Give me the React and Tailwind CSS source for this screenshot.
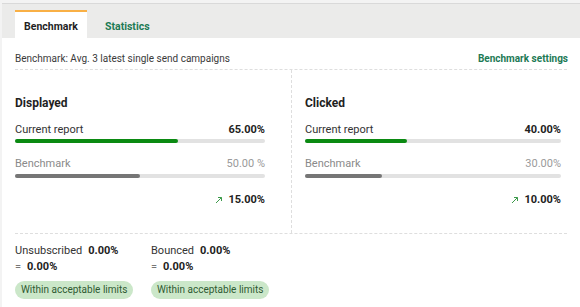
const METRICS = [
  { title: 'Displayed', current: 65, currentLabel: '65.00%', bench: 50, benchLabel: '50.00 %', diff: '15.00%' },
  { title: 'Clicked', current: 40, currentLabel: '40.00%', bench: 30, benchLabel: '30.00%', diff: '10.00%' },
]

const LIMITS = [
  { label: 'Unsubscribed', value: '0.00%', diff: '0.00%' },
  { label: 'Bounced', value: '0.00%', diff: '0.00%' },
]

function UpArrow() {
  return (
    <svg width="8" height="8" viewBox="0 0 8 8" className="mr-[5px]">
      <path d="M1 7 L6.5 1.5 M3 1.5 H6.5 V5" fill="none" stroke="#3c9a4a" strokeWidth="1" />
    </svg>
  )
}

function Bar({ value, color }) {
  return (
    <div className="h-[4px] w-full rounded-full bg-[#e2e2e2]">
      <div className={`h-full rounded-full ${color}`} style={{ width: `${value}%` }} />
    </div>
  )
}

function MetricColumn({ m, className }) {
  return (
    <div className={className}>
      <h3 className="text-[12px] font-bold text-[#1f1f1f] leading-[16px]">{m.title}</h3>

      {/* current report */}
      <div className="mt-[12px] flex justify-between text-[11px] leading-[14px]">
        <span className="text-[#333]">Current report</span>
        <span className="font-bold text-[#222]">{m.currentLabel}</span>
      </div>
      <div className="mt-[2px]">
        <Bar value={m.current} color="bg-[#0b8a12]" />
      </div>

      {/* benchmark */}
      <div className="mt-[14px] flex justify-between text-[11px] leading-[14px]">
        <span className="text-[#8a8a8a]">Benchmark</span>
        <span className="text-[#9a9a9a]">{m.benchLabel}</span>
      </div>
      <div className="mt-[3px]">
        <Bar value={m.bench} color="bg-[#767676]" />
      </div>

      <div className="mt-[15px] flex items-center justify-end text-[11px] font-bold text-[#222] leading-[14px]">
        <UpArrow />
        {m.diff}
      </div>
    </div>
  )
}

export default function App() {
  return (
    <div
      className="w-[580px] h-[307px] overflow-hidden bg-[#f3f3f3] pt-[3px] pl-[2px]"
      style={{ fontFamily: 'Roboto, "Liberation Sans", sans-serif' }}
    >
      <div className="h-full border-t border-[#d9d9d9] bg-white">
        {/* Tabs */}
        <div className="flex h-[34px] items-end bg-[#ebebea] pl-[13px]">
          <div className="flex h-[28px] w-[72px] items-center justify-center border-t-2 border-[#f9b046] bg-white pt-[3px] text-[10.5px] font-bold text-[#1f1f1f]">
            Benchmark
          </div>
          <div className="flex h-[28px] items-center px-[18px] pt-[5px] text-[10.5px] font-bold text-[#1d7a55]">
            Statistics
          </div>
        </div>

        <div className="px-[13px]">
          {/* Header */}
          <div className="flex items-center justify-between border-b border-dashed border-[#dedede] pt-[13px] pb-[3px] text-[10px] leading-[15px]">
            <span className="text-[#3a3a3a]">Benchmark: Avg. 3 latest single send campaigns</span>
            <span className="mr-[-1px] font-bold text-[#1d7a55]">Benchmark settings</span>
          </div>

          {/* Metrics */}
          <div className="flex border-b border-dashed border-[#dedede]">
            <MetricColumn m={METRICS[0]} className="w-[276px] pt-[25px] pr-[26px] pb-[26px]" />
            <MetricColumn
              m={METRICS[1]}
              className="flex-1 border-l border-dashed border-[#dedede] pt-[25px] pl-[13px] pr-[6px] pb-[26px]"
            />
          </div>

          {/* Limits */}
          <div className="flex pt-[9px]">
            {LIMITS.map((l, i) => (
              <div key={l.label} className={`text-[11px] leading-[16px] ${i === 0 ? 'w-[136px]' : ''}`}>
                <div>
                  <span className="text-[#333]">{l.label}</span>
                  <span className="ml-[6px] font-bold text-[#222]">{l.value}</span>
                </div>
                <div>
                  <span className="text-[#777]">=</span>
                  <span className="ml-[6px] font-bold text-[#222]">{l.diff}</span>
                </div>
                <div className="mt-[6px] inline-flex h-[18px] items-center rounded-full bg-[#cbe7c9] px-[6px] text-[10px] text-[#2f5a32]">
                  Within acceptable limits
                </div>
              </div>
            ))}
          </div>
        </div>
      </div>
    </div>
  )
}
